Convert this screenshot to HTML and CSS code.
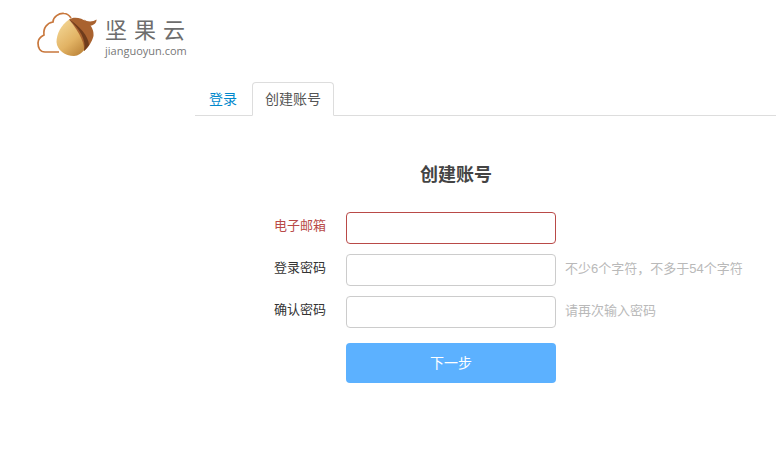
FILE: index.html
```html
<!DOCTYPE html>
<html lang="zh-CN">
<head>
    <meta charset="UTF-8">
    <meta name="viewport" content="width=device-width, initial-scale=1.0">
    <title>创建账号</title>
    <link rel="stylesheet" href="styles.css">
</head>
<body>

<div class="header">
    <svg class="logo-icon" width="70" height="46" viewBox="0 0 70 46">
        <defs>
            <linearGradient id="nut" x1="0.2" y1="0.1" x2="0.8" y2="1">
                <stop offset="0" stop-color="#f1d28f"/>
                <stop offset="0.55" stop-color="#e2b364"/>
                <stop offset="1" stop-color="#bd853a"/>
            </linearGradient>
        </defs>
        <!-- cloud -->
        <path d="M22 40 H8 C3 40 1 36 1 31 C1 27 3 25 7 23 C6 16 10 11 16 10 C16 5 22 1 27 1.5 C30 1.5 32 3 34 6" fill="none" stroke="#c8773c" stroke-width="1.7"/>
        <!-- acorn body -->
        <path d="M32 7.5 C24 13 19.5 22 19.5 30 C20 38 28 44 37 44 C41 44 45 41 48 37 C49 33 46 24 32 7.5 Z" fill="url(#nut)"/>
        <!-- cap -->
        <path d="M32 7.5 C36 4.5 44 5 50 10 C55 14 57 19 56.5 24 C55 30 51 36 47 39 C48 33 44 22 32 7.5 Z" fill="#a9622f"/>
        <path d="M32 7.5 C42 16 50 28 47 39 C49 37 51 35 52 33 C52 25 42 13 32 7.5 Z" fill="#6f3c1c"/>
        <!-- stem -->
        <path d="M47 7.5 C50 10 56 10 59.5 7.5 C60 10 57 14 52 14 C50 12 48 10 47 7.5 Z" fill="#a9622f"/>
    </svg>
    <div class="logo-text">
        <div class="logo-name">坚果云</div>
        <div class="logo-domain">jianguoyun.com</div>
    </div>
</div>

<div class="tabs">
    <a class="tab" href="#">登录</a>
    <a class="tab tab-active" href="#">创建账号</a>
</div>

<div class="content">
    <h2 class="title">创建账号</h2>
    <form class="signup-form">
        <div class="form-row row-error">
            <label class="form-label" for="email">电子邮箱</label>
            <input class="form-input" type="text" id="email">
        </div>
        <div class="form-row">
            <label class="form-label" for="password">登录密码</label>
            <input class="form-input" type="password" id="password">
            <span class="form-hint">不少6个字符，不多于54个字符</span>
        </div>
        <div class="form-row">
            <label class="form-label" for="confirm">确认密码</label>
            <input class="form-input" type="password" id="confirm">
            <span class="form-hint">请再次输入密码</span>
        </div>
        <button class="submit-btn" type="button">下一步</button>
    </form>
</div>

</body>
</html>
```

FILE: styles.css
```css
* {
    box-sizing: border-box;
}

html, body {
    overflow: hidden;
}

body {
    margin: 0;
    background: #fff;
    color: #333;
    font-family: "Liberation Sans", "Noto Sans CJK SC", sans-serif;
    font-size: 13px;
}

.header {
    display: flex;
    align-items: flex-start;
    height: 82px;
    padding: 12px 0 0 37px;
}

.logo-text {
    margin-left: -3px;
}

.logo-name {
    padding: 6px 0 0 1px;
    font-size: 22px;
    line-height: 26px;
    letter-spacing: 7px;
    color: #6d6d6d;
    white-space: nowrap;
}

.logo-domain {
    padding-left: 1px;
    font-family: "Open Sans", sans-serif;
    font-size: 11px;
    line-height: 13px;
    color: #777;
}

.tabs {
    display: flex;
    align-items: flex-end;
    height: 34px;
    margin-left: 195px;
    border-bottom: 1px solid #ddd;
}

.tab {
    display: block;
    height: 34px;
    margin-bottom: -1px;
    padding: 0 14px;
    font-size: 14px;
    line-height: 34px;
    color: #0088cc;
    text-decoration: none;
}

.tab-active {
    margin-left: 1px;
    padding: 0 12px;
    border: 1px solid #ddd;
    border-bottom-color: #fff;
    border-radius: 4px 4px 0 0;
    line-height: 32px;
    color: #555;
}

.content {
    width: 522px;
    margin-left: 195px;
}

.title {
    margin: 0;
    padding-top: 47px;
    height: 96px;
    font-size: 18px;
    line-height: 24px;
    font-weight: bold;
    text-align: center;
    color: #444;
}

.form-row {
    display: flex;
    align-items: center;
    height: 32px;
    margin-bottom: 10px;
}

.form-label {
    flex: 0 0 131px;
    margin-right: 20px;
    padding-bottom: 8px;
    text-align: right;
}

.form-input {
    flex: 0 0 210px;
    height: 32px;
    padding: 4px 6px;
    border: 1px solid #ccc;
    border-radius: 4px;
    background: #fff;
    outline: none;
}

.form-hint {
    margin-left: 9px;
    padding-bottom: 6px;
    color: #b9b9b9;
    white-space: nowrap;
}

.row-error .form-label {
    color: #b94a48;
}

.row-error .form-input {
    border-color: #b94a48;
}

.submit-btn {
    display: block;
    width: 210px;
    height: 40px;
    margin: 15px 0 0 151px;
    padding-bottom: 3px;
    border: none;
    border-radius: 4px;
    background: #5cb1ff;
    color: #fff;
    font-family: inherit;
    font-size: 14px;
    cursor: pointer;
}
```
